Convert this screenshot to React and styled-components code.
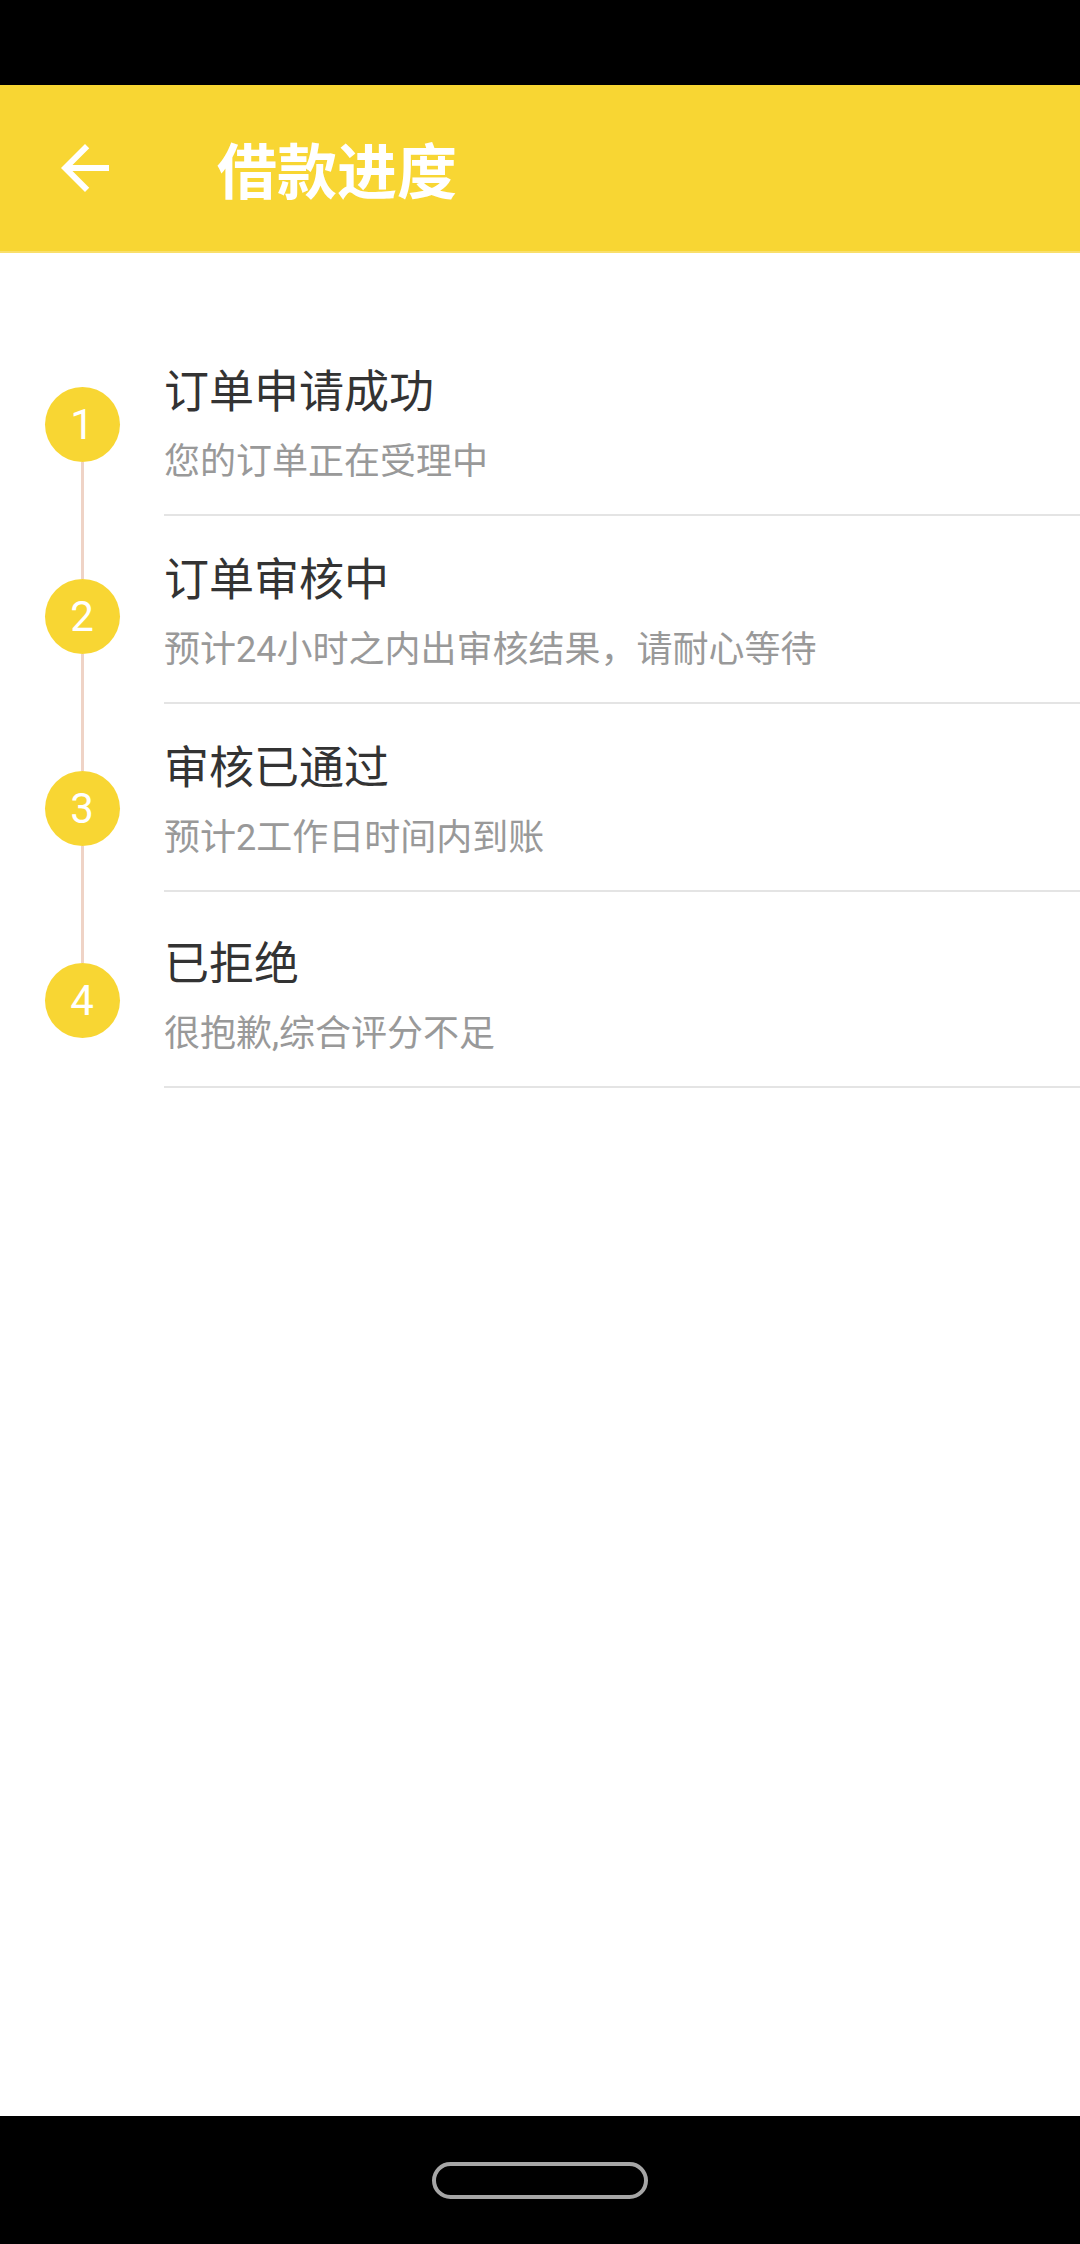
import React from "react";
import styled, { createGlobalStyle } from "styled-components";

const GlobalStyle = createGlobalStyle`
  html, body {
    margin: 0;
    padding: 0;
    background: #ffffff;
  }
  body {
    font-family: Roboto, "Noto Sans CJK SC", "Noto Sans", sans-serif;
  }
  * { box-sizing: border-box; }
`;

const Page = styled.div`
  width: 1080px;
  height: 2244px;
  display: flex;
  flex-direction: column;
  background: #ffffff;
  overflow: hidden;
`;

const StatusBar = styled.div`
  height: 85px;
  flex: none;
  background: #000000;
`;

const Header = styled.header`
  height: 168px;
  flex: none;
  background: #f8d633;
  border-bottom: 2px solid #f9df6a;
  display: flex;
  align-items: center;
  padding-left: 49px;
`;

const BackButton = styled.button`
  width: 72px;
  height: 72px;
  padding: 0;
  border: none;
  background: transparent;
  display: flex;
  align-items: center;
  justify-content: center;
  color: #ffffff;
`;

const Title = styled.h1`
  margin: 0 0 0 96px;
  font-size: 60px;
  font-weight: 700;
  color: #ffffff;
  line-height: 1;
  font-family: "Noto Sans CJK SC", sans-serif;
`;

const Main = styled.main`
  flex: 1;
  display: flex;
  align-items: flex-start;
`;

const Rail = styled.div`
  width: 164px;
  flex: none;
  display: flex;
  flex-direction: column;
  align-items: center;
  padding-top: 134px;
`;

const StepDot = styled.div`
  width: 75px;
  height: 75px;
  flex: none;
  border-radius: 50%;
  background: #f8d633;
  color: #ffffff;
  display: flex;
  align-items: center;
  justify-content: center;
  font-family: Roboto, sans-serif;
  font-size: 42px;
  font-weight: 400;
  line-height: 1;
`;

const Connector = styled.div`
  width: 3px;
  height: 117px;
  flex: none;
  background: #efd3c6;
`;

const List = styled.ul`
  flex: 1;
  margin: 0;
  padding: 75px 0 0 0;
  list-style: none;
`;

const Item = styled.li`
  padding: ${(p) => (p.$extra ? 42 : 34)}px 0 30px 0;
  border-bottom: 2px solid #e4e4e4;
`;

const ItemTitle = styled.div`
  font-size: 45px;
  line-height: 54px;
  color: #333333;
  font-family: "Noto Sans CJK SC", sans-serif;
`;

const ItemDesc = styled.div`
  margin-top: 25px;
  font-size: 36px;
  line-height: 43px;
  color: #999999;
`;

const NavBar = styled.div`
  height: 128px;
  flex: none;
  background: #000000;
  display: flex;
  align-items: center;
  justify-content: center;
`;

const HomePill = styled.div`
  width: 216px;
  height: 37px;
  border: 4px solid #a6a6a6;
  border-radius: 19px;
`;

const steps = [
  { n: 1, title: "订单申请成功", desc: "您的订单正在受理中" },
  { n: 2, title: "订单审核中", desc: "预计24小时之内出审核结果，请耐心等待" },
  { n: 3, title: "审核已通过", desc: "预计2工作日时间内到账" },
  { n: 4, title: "已拒绝", desc: "很抱歉,综合评分不足" },
];

export default function App() {
  return (
    <>
      <GlobalStyle />
      <Page>
        <StatusBar />
        <Header>
          <BackButton aria-label="返回">
            <svg width="72" height="72" viewBox="0 0 24 24" fill="currentColor">
              <path d="M20 11H7.83l5.59-5.59L12 4l-8 8 8 8 1.41-1.41L7.83 13H20v-2z" />
            </svg>
          </BackButton>
          <Title>借款进度</Title>
        </Header>
        <Main>
          <Rail>
            {steps.map((s, i) => (
              <React.Fragment key={s.n}>
                {i > 0 && <Connector />}
                <StepDot>{s.n}</StepDot>
              </React.Fragment>
            ))}
          </Rail>
          <List>
            {steps.map((s, i) => (
              <Item key={s.n} $extra={i === steps.length - 1}>
                <ItemTitle>{s.title}</ItemTitle>
                <ItemDesc>{s.desc}</ItemDesc>
              </Item>
            ))}
          </List>
        </Main>
        <NavBar>
          <HomePill />
        </NavBar>
      </Page>
    </>
  );
}
